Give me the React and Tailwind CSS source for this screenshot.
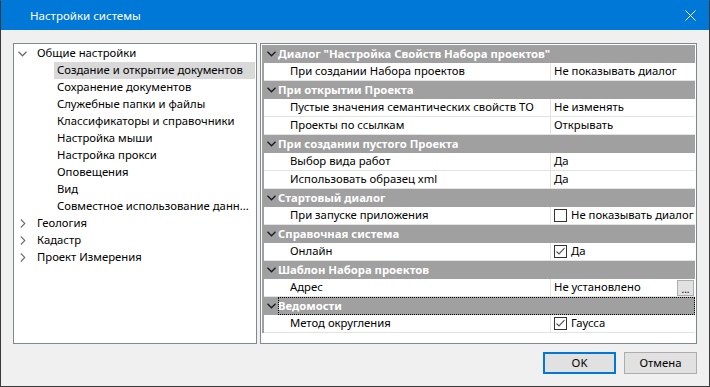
import React from 'react';

const treeItems = [
  { label: 'Общие настройки', level: 0, open: true },
  { label: 'Создание и открытие документов', level: 1, selected: true },
  { label: 'Сохранение документов', level: 1 },
  { label: 'Служебные папки и файлы', level: 1 },
  { label: 'Классификаторы и справочники', level: 1 },
  { label: 'Настройка мыши', level: 1 },
  { label: 'Настройка прокси', level: 1 },
  { label: 'Оповещения', level: 1 },
  { label: 'Вид', level: 1 },
  { label: 'Совместное использование данн...', level: 1 },
  { label: 'Геология', level: 0 },
  { label: 'Кадастр', level: 0 },
  { label: 'Проект Измерения', level: 0 },
];

const sections = [
  {
    title: 'Диалог "Настройка Свойств Набора проектов"',
    rows: [{ name: 'При создании Набора проектов', value: 'Не показывать диалог' }],
  },
  {
    title: 'При открытии Проекта',
    rows: [
      { name: 'Пустые значения семантических свойств ТО', value: 'Не изменять' },
      { name: 'Проекты по ссылкам', value: 'Открывать' },
    ],
  },
  {
    title: 'При создании пустого Проекта',
    rows: [
      { name: 'Выбор вида работ', value: 'Да' },
      { name: 'Использовать образец xml', value: 'Да' },
    ],
  },
  {
    title: 'Стартовый диалог',
    rows: [{ name: 'При запуске приложения', value: 'Не показывать диалог', check: false }],
  },
  {
    title: 'Справочная система',
    rows: [{ name: 'Онлайн', value: 'Да', check: true }],
  },
  {
    title: 'Шаблон Набора проектов',
    rows: [{ name: 'Адрес', value: 'Не установлено', browse: true }],
  },
  {
    title: 'Ведомости',
    focused: true,
    rows: [{ name: 'Метод округления', value: 'Гаусса', check: true }],
  },
];

const ChevronDown = ({ className }) => (
  <svg width="9" height="6" viewBox="0 0 9 6" className={className}>
    <polyline points="0.5,0.8 4.5,4.8 8.5,0.8" fill="none" stroke="currentColor" strokeWidth="1.3" />
  </svg>
);

const ChevronRight = ({ className }) => (
  <svg width="6" height="9" viewBox="0 0 6 9" className={className}>
    <polyline points="0.8,0.5 4.8,4.5 0.8,8.5" fill="none" stroke="currentColor" strokeWidth="1.1" />
  </svg>
);

const CheckBox = ({ checked }) => (
  <span className="w-[13px] h-[13px] border border-[#333333] bg-white flex items-center justify-center shrink-0">
    {checked && (
      <svg width="11" height="11" viewBox="0 0 11 11">
        <polyline points="1.5,5.5 4,8 9.5,2.2" fill="none" stroke="#555555" strokeWidth="1.2" />
      </svg>
    )}
  </span>
);

export default function App() {
  return (
    <div
      className="w-[710px] h-[387px] bg-[#f0f0f0] border border-[#3a3a3a] border-t-[#0078d7] flex flex-col text-[11.3px] text-black"
      style={{ fontFamily: '"Noto Sans", "Liberation Sans", sans-serif' }}
    >
      {/* Title bar */}
      <div className="h-[29px] bg-[#0078d7] flex items-center justify-between pl-[29px] pr-[13px] text-white shrink-0">
        <span className="text-[11.5px]">Настройки системы</span>
        <svg width="11" height="11" viewBox="0 0 11 11">
          <line x1="0.5" y1="0.5" x2="10.5" y2="10.5" stroke="white" strokeWidth="1" />
          <line x1="10.5" y1="0.5" x2="0.5" y2="10.5" stroke="white" strokeWidth="1" />
        </svg>
      </div>

      <div className="flex flex-col px-[12px] pt-[13px]">
        <div className="flex gap-[3px] h-[301px]">
          {/* Tree */}
          <div className="w-[244px] bg-white border border-[#828790] pt-[1px] pr-[1px]">
            {treeItems.map((item) => (
              <div key={item.label} className="h-[17px] flex items-center">
                {item.level === 0 ? (
                  <>
                    <span className="w-[23px] flex justify-start pl-[4px] text-[#6d6d6d]">
                      {item.open ? <ChevronDown /> : <ChevronRight className="ml-[2px]" />}
                    </span>
                    <span className="whitespace-nowrap">{item.label}</span>
                  </>
                ) : (
                  <span
                    className={`ml-[40px] h-[17px] flex-1 flex items-center pl-[3px] whitespace-nowrap ${
                      item.selected ? 'bg-[#d9d9d9]' : ''
                    }`}
                  >
                    {item.label}
                  </span>
                )}
              </div>
            ))}
          </div>

          {/* Property grid */}
          <div className="flex-1 bg-white border border-[#828790] pt-[1px] pl-[1px] pr-[1px]">
            {sections.map((section) => (
              <div key={section.title}>
                <div className="h-[18px] bg-[#a0a0a0] flex items-center text-white font-bold">
                  <span className="w-[16px] flex justify-end pr-[2px] text-[#1a1a1a]">
                    <ChevronDown />
                  </span>
                  <span
                    className={`h-[18px] flex items-center whitespace-nowrap ${
                      section.focused ? 'flex-1 outline-1 outline-dotted outline-black -outline-offset-1' : ''
                    }`}
                  >
                    {section.title}
                  </span>
                </div>
                {section.rows.map((row) => (
                  <div key={row.name} className="h-[18px] flex border-l-[2px] border-[#a0a0a0]">
                    <div className="w-[287px] pl-[26px] flex items-center border-b border-r border-[#e3e3e3] whitespace-nowrap overflow-hidden">
                      {row.name}
                    </div>
                    <div className="flex-1 flex items-center pl-[3px] border-b border-[#e3e3e3] whitespace-nowrap overflow-hidden">
                      {row.check !== undefined && (
                        <span className="mr-[4px]">
                          <CheckBox checked={row.check} />
                        </span>
                      )}
                      <span className="flex-1">{row.value}</span>
                      {row.browse && (
                        <span className="w-[17px] h-[16px] mr-[1px] bg-[#e1e1e1] border border-[#adadad] flex items-end justify-center text-[10px] leading-[12px]">
                          ...
                        </span>
                      )}
                    </div>
                  </div>
                ))}
              </div>
            ))}
          </div>
        </div>

        {/* Buttons */}
        <div className="flex justify-end gap-[8px] mt-[8px]">
          <button className="w-[73px] h-[22px] bg-[#e1e1e1] border-2 border-[#0078d7] flex items-center justify-center">
            OK
          </button>
          <button className="w-[73px] h-[22px] bg-[#e1e1e1] border border-[#adadad] flex items-center justify-center">
            Отмена
          </button>
        </div>
      </div>
    </div>
  );
}
